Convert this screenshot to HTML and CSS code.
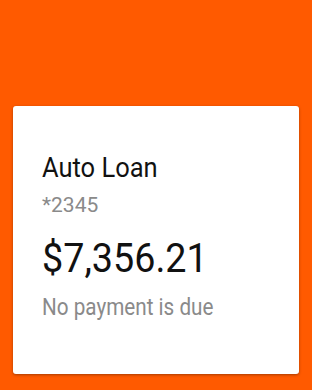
FILE: index.html
```html
<!DOCTYPE html>
<html lang="en">
<head>
  <meta charset="UTF-8" />
  <meta name="viewport" content="width=device-width, initial-scale=1.0"/>
  <title>Auto Loan</title>
  <link rel="stylesheet" href="styles.css">
</head>
<body>
  <div class="screen">
    <div class="card">
      <div class="title">Auto Loan</div>
      <div class="account">*2345</div>
      <div class="amount">$7,356.21</div>
      <div class="status">No payment is due</div>
    </div>
  </div>
</body>
</html>
```

FILE: styles.css
```css
body {
  margin: 0;
  font-family: Roboto, "Liberation Sans", sans-serif;
  background-color: #ff5a00;
}

.screen {
  width: 312px;
  height: 390px;
  box-sizing: border-box;
  padding: 106px 13px 16px 13px;
}

.card {
  height: 268px;
  background-color: #fff;
  border-radius: 3px;
  box-shadow: 0 1px 3px rgba(0, 0, 0, 0.35);
  padding: 46px 30px 0 29px;
  box-sizing: border-box;
}

/* the watch screenshot is squeezed sideways */
.title,
.account,
.amount,
.status {
  transform-origin: left center;
}

.title {
  font-size: 28px;
  color: #111;
  line-height: 32px;
  transform: scaleX(0.91);
}

.account {
  font-size: 21px;
  color: #8a8a8a;
  line-height: 26px;
  margin-top: 8px;
}

.amount {
  font-size: 41px;
  color: #111;
  line-height: 48px;
  margin-top: 16px;
  transform: scaleX(0.92);
}

.status {
  font-size: 23.5px;
  color: #8a8a8a;
  line-height: 28px;
  margin-top: 11px;
  transform: scaleX(0.88);
}
```
